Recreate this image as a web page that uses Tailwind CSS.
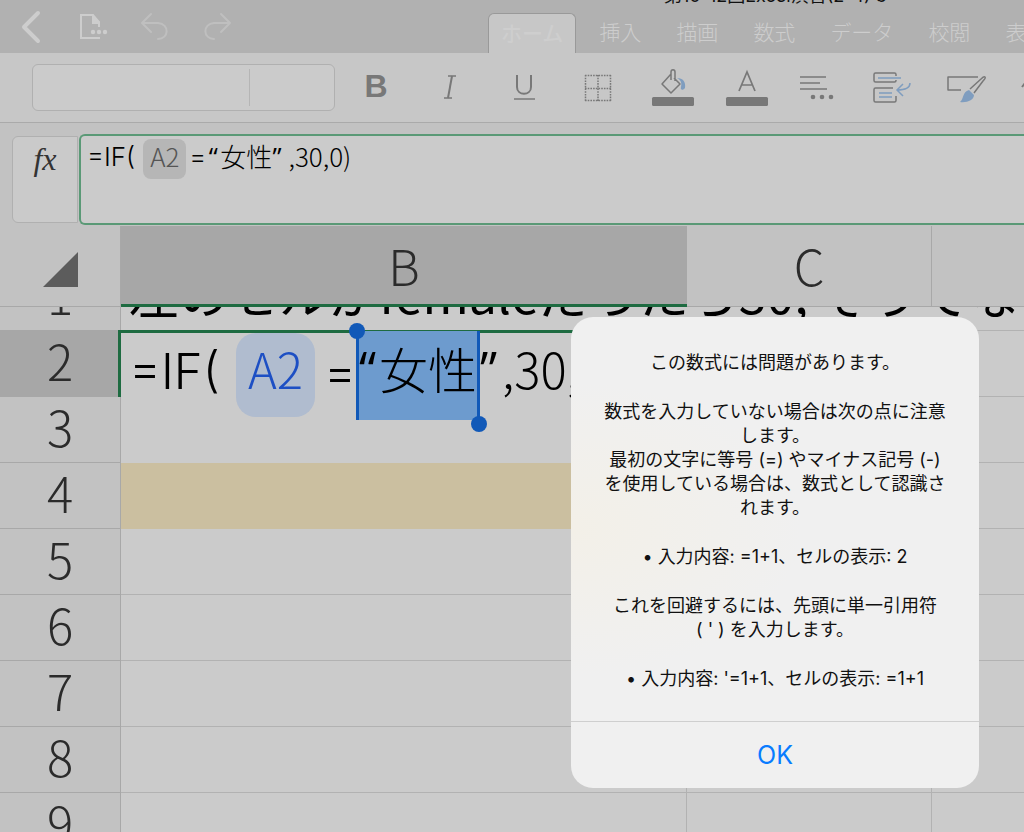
<!DOCTYPE html>
<html lang="ja">
<head>
<meta charset="utf-8">
<title>Excel</title>
<script src="https://cdn.jsdelivr.net/npm/@tailwindcss/browser@4"></script>
</head>
<body class="relative flex h-screen flex-col overflow-hidden bg-[#c2c2c2] font-['Noto_Sans_CJK_JP',sans-serif] text-black">

<header class="relative flex h-[53px] shrink-0 items-end overflow-hidden bg-[#b1b1b1] text-[#cdcdcd]">
  <h1 class="absolute -top-4 left-[664px] font-['Inter','Noto_Sans_CJK_JP',sans-serif] text-[18px] leading-6 whitespace-nowrap text-[#111]">第10-12回Excel演習(2-4) 3</h1>
  <div class="flex h-full w-[488px] shrink-0 items-center">
    <button aria-label="戻る" class="flex w-[61px] justify-center"><svg width="24" height="36" viewBox="0 0 24 36" fill="none" stroke="currentColor" stroke-width="4" stroke-linecap="round" stroke-linejoin="round"><path d="M19 4L5 18l14 14"/></svg></button>
    <button aria-label="ファイル" class="flex w-[64px] justify-center"><svg width="32" height="30" viewBox="0 0 32 30" fill="none"><path d="M23 26H4V3h12l6 7v5" stroke="currentColor" stroke-width="2"/><path d="M15 2l8 8v2h-8z" fill="currentColor"/><g fill="currentColor"><circle cx="16" cy="20" r="2.2"/><circle cx="22" cy="20" r="2.2"/><circle cx="28" cy="20" r="2.2"/></g></svg></button>
    <button aria-label="元に戻す" class="flex w-[60px] justify-center text-[#bfbfbf]"><svg width="30" height="30" viewBox="0 0 30 30" fill="none" stroke="currentColor" stroke-width="2" stroke-linecap="round" stroke-linejoin="round"><path d="M11 2L2 11l9 9M2 11h16c12 1 11 16 0 16"/></svg></button>
    <button aria-label="やり直し" class="flex w-[64px] justify-center text-[#bfbfbf]"><svg width="30" height="30" viewBox="0 0 30 30" fill="none" stroke="currentColor" stroke-width="2" stroke-linecap="round" stroke-linejoin="round"><path d="M19 2l9 9-9 9M28 11H12C0 12 1 27 12 27"/></svg></button>
  </div>
  <nav class="flex h-10 items-start gap-[35px] text-[21px] leading-9 font-light whitespace-nowrap">
    <a href="#" class="-mr-3 h-10 rounded-t-md border border-b-0 border-[#999] bg-[#c7c7c7] px-3 font-medium text-[#cecece]">ホーム</a>
    <a href="#">挿入</a>
    <a href="#">描画</a>
    <a href="#">数式</a>
    <a href="#">データ</a>
    <a href="#">校閲</a>
    <a href="#">表示</a>
  </nav>
</header>

<div class="flex h-[70px] shrink-0 items-center border-b border-[#aaa] bg-[#c7c7c7] pl-8 text-[#787878]">
  <div class="mr-1 flex h-[47px] w-[303px] shrink-0 rounded-md border border-[#b0b0b0] bg-[#cbcbcb] py-1">
    <input aria-label="フォント" class="w-[217px] border-r border-[#b5b5b5] outline-none">
    <input aria-label="フォント サイズ" class="w-20 outline-none">
  </div>
  <button aria-label="太字" class="flex w-[74px] shrink-0 justify-center font-['Liberation_Sans',sans-serif] text-[32px] leading-8 font-bold"><span class="pb-1">B</span></button>
  <button aria-label="斜体" class="flex w-[74px] shrink-0 justify-center"><svg width="14" height="28" viewBox="0 0 14 28" fill="none" stroke="currentColor" stroke-width="2"><path d="M5 2h8M1 24h8" stroke-width="1.5"/><path d="M9 2L5 24"/></svg></button>
  <button aria-label="下線" class="flex w-[74px] shrink-0 justify-center"><svg width="24" height="28" viewBox="0 0 24 28" fill="none" stroke="currentColor" stroke-width="2"><path d="M5 1v12c0 9 14 9 14 0V1"/><path d="M2 25h21" stroke-width="1.5"/></svg></button>
  <button aria-label="罫線" class="flex w-[74px] shrink-0 justify-center"><svg width="28" height="28" viewBox="0 0 28 28" fill="none" stroke="currentColor" stroke-width="1.5" stroke-dasharray="1.6 1.1"><path d="M1 1.5h26M1 14.500h26M1 26.500h26M1.500 1v26M14 1v26M26.500 1v26"/></svg></button>
  <button aria-label="塗りつぶしの色" class="flex w-[76px] shrink-0 justify-center"><svg width="44" height="40" viewBox="0 0 44 40" fill="none"><path d="M20 6L11 16l9 9 9-9-6-6M20 12V4c0-3 4-3 4 0v9" stroke="currentColor" stroke-width="1.500" stroke-linejoin="round"/><path d="M26 10c6 0 9 4 8 10-2 3-5 2-4-1 1-4 0-7-4-9z" fill="#7f9dbf"/><rect x="1" y="29" width="42" height="9" rx="1.500" fill="currentColor"/></svg></button>
  <button aria-label="フォントの色" class="flex w-[72px] shrink-0 justify-center"><svg width="44" height="40" viewBox="0 0 44 40" fill="none"><path d="M14 23L22 4l8 19M17 17h10" stroke="currentColor" stroke-width="1.700"/><rect x="1" y="29" width="42" height="9" rx="1.500" fill="currentColor"/></svg></button>
  <button aria-label="配置" class="flex w-[68px] shrink-0 justify-center"><svg width="40" height="28" viewBox="0 0 40 28"><path d="M3 3h26M3 9h20M3 15h27" stroke="currentColor" stroke-width="1.500"/><g fill="currentColor"><circle cx="16" cy="23" r="2.300"/><circle cx="25" cy="23" r="2.300"/><circle cx="34" cy="23" r="2.300"/></g></svg></button>
  <button aria-label="折り返し" class="flex w-20 shrink-0 justify-center"><svg width="40" height="34" viewBox="0 0 40 34" fill="none" stroke-width="1.500"><path d="M25 5V3.500Q25 2 23.500 2h-19Q3 2 3 3.500v6Q3 11 4.500 11h19q1.500 0 1.500-1.500V9M22 17H4.500Q3 17 3 18.500v11Q3 31 4.500 31h19q1.500 0 1.500-1.500V25" stroke="currentColor"/><path d="M7 7h23M8 22h13M8 26h13M39 12c0 5-4 7-13 7M32 13l-6 6 6 6" stroke="#7f9dbf"/></svg></button>
  <button aria-label="書式のコピー" class="flex w-[70px] shrink-0 justify-center"><svg width="42" height="30" viewBox="0 0 42 30" fill="none" stroke="currentColor" stroke-width="1.500" stroke-linejoin="round"><path d="M33 4H3v13h13M25 16L36 6q3-3 4-2t-2 4L29 20"/><path d="M24 17l5 5c0 5-7 8-14 7 4-3 2-10 9-12z" fill="#7f9dbf" stroke="none"/></svg></button>
  <button aria-label="その他" class="flex w-[74px] shrink-0 pl-5"><svg width="30" height="30" viewBox="0 0 30 30" fill="none" stroke="currentColor" stroke-width="2"><path d="M1 14L8 5l8 9"/></svg></button>
</div>

<div class="flex h-[103px] shrink-0 pt-[11px] pl-3">
  <button aria-label="関数の挿入" class="mt-0.5 flex h-[87px] w-[66px] shrink-0 justify-center rounded-l-md border border-[#b0b0b0] bg-[#cacaca] pt-0.5 font-['Liberation_Serif',serif] text-[32px] leading-10 italic text-[#333]">fx</button>
  <div role="textbox" aria-label="数式バー" class="ml-px h-[91px] flex-1 rounded-l-md border-2 border-r-0 border-[#5a9976] bg-[#cbcbcb] pl-1.5">
    <div class="flex h-11 items-start text-[26px] leading-10 font-light whitespace-nowrap"><span class="pt-px font-['Inter',sans-serif]">=IF(</span><span class="mt-[3px] mr-0.5 ml-2 h-10 rounded-lg bg-[#b6b6b6] px-[7px] leading-[34px] text-[#555]">A2</span><span class="pt-px pl-px font-['Inter',sans-serif]">=</span><span class="w-3.5 text-center font-['Open_Sans',sans-serif] font-normal">“</span><span>女性</span><span class="w-4 font-['Open_Sans',sans-serif] font-normal">”</span><span>,30,0)</span></div>
  </div>
</div>

<main class="relative min-h-0 flex-1 overflow-hidden">
  <table class="w-full table-fixed border-separate border-spacing-0 text-[49px] leading-[54px] font-light text-[#2b2b2b]">
    <colgroup><col class="w-[121px]"><col class="w-[566px]"><col class="w-[245px]"><col></colgroup>
    <thead>
      <tr class="h-[81px]">
        <th class="border-r border-b border-[#a8a8a8] p-0"><button aria-label="すべて選択" class="mt-1.5 mr-[42px] ml-auto block"><svg width="35" height="35" viewBox="0 0 35 35"><path d="M35 0v35H0z" fill="#5c5c5c"/></svg></button></th>
        <th scope="col" class="border-b-3 border-[#1e6b41] bg-[#a7a7a7] p-0 font-light">B</th>
        <th scope="col" class="border-r border-b border-[#a8a8a8] p-0 pb-0.5 font-light">C</th>
        <th scope="col" class="border-b border-[#a8a8a8] p-0"></th>
      </tr>
    </thead>
    <tbody>
      <tr class="h-[23px]">
        <th scope="row" class="border-r border-[#a8a8a8] p-0 font-light"><div class="flex h-[23px] items-end justify-center overflow-hidden"><span class="mb-[9px]">1</span></div></th>
        <td colspan="3" class="bg-[#cbcbcb] p-0 pl-2 text-black"><div class="flex h-[23px] items-end overflow-hidden"><span class="mb-[11px] text-[50px] font-normal whitespace-nowrap">左のセルがfemaleだったら30, そうでない</span></div></td>
      </tr>
      <tr class="h-[67px]"><th scope="row" class="border-r-3 border-[#1e6b41] bg-[#a7a7a7] p-0 pb-2 pl-0.5 font-light">2</th><td class="border-t-3 border-[#1e6b41] bg-[#cbcbcb]"></td><td class="border-y border-[#b2b2b2] bg-[#cbcbcb]"></td><td class="border-y border-[#b2b2b2] bg-[#cbcbcb]"></td></tr>
      <tr class="h-[66px]"><th scope="row" class="border-r border-b border-[#a8a8a8] p-0 pb-2 font-light">3</th><td class="bg-[#cbcbcb]"></td><td class="border-b border-[#b2b2b2] bg-[#cbcbcb]"></td><td class="border-b border-[#b2b2b2] bg-[#cbcbcb]"></td></tr>
      <tr class="h-[66px]"><th scope="row" class="border-r border-b border-[#a8a8a8] p-0 pb-2 font-light">4</th><td class="bg-[#cbbfa0]"></td><td class="border-b border-[#b2b2b2] bg-[#cbcbcb]"></td><td class="border-b border-[#b2b2b2] bg-[#cbcbcb]"></td></tr>
      <tr class="h-[66px]"><th scope="row" class="border-r border-b border-[#a8a8a8] p-0 pb-2 font-light">5</th><td class="border-r border-b border-[#b2b2b2] bg-[#cbcbcb]"></td><td class="border-r border-b border-[#b2b2b2] bg-[#cbcbcb]"></td><td class="border-b border-[#b2b2b2] bg-[#cbcbcb]"></td></tr>
      <tr class="h-[66px]"><th scope="row" class="border-r border-b border-[#a8a8a8] p-0 pb-2 font-light">6</th><td class="border-r border-b border-[#b2b2b2] bg-[#cbcbcb]"></td><td class="border-r border-b border-[#b2b2b2] bg-[#cbcbcb]"></td><td class="border-b border-[#b2b2b2] bg-[#cbcbcb]"></td></tr>
      <tr class="h-[66px]"><th scope="row" class="border-r border-b border-[#a8a8a8] p-0 pb-2 font-light">7</th><td class="border-r border-b border-[#b2b2b2] bg-[#cbcbcb]"></td><td class="border-r border-b border-[#b2b2b2] bg-[#cbcbcb]"></td><td class="border-b border-[#b2b2b2] bg-[#cbcbcb]"></td></tr>
      <tr class="h-[66px]"><th scope="row" class="border-r border-b border-[#a8a8a8] p-0 pb-2 font-light">8</th><td class="border-r border-b border-[#b2b2b2] bg-[#cbcbcb]"></td><td class="border-r border-b border-[#b2b2b2] bg-[#cbcbcb]"></td><td class="border-b border-[#b2b2b2] bg-[#cbcbcb]"></td></tr>
      <tr class="h-[66px]"><th scope="row" class="border-r border-b border-[#a8a8a8] p-0 pb-2 font-light">9</th><td class="border-r border-b border-[#b2b2b2] bg-[#cbcbcb]"></td><td class="border-r border-b border-[#b2b2b2] bg-[#cbcbcb]"></td><td class="border-b border-[#b2b2b2] bg-[#cbcbcb]"></td></tr>
    </tbody>
  </table>

  <!-- in-cell editor -->
  <div role="textbox" aria-label="セル B2" class="absolute top-[105px] left-[121px] flex items-start pl-2 text-[49px] leading-[74px] font-light whitespace-nowrap">
    <span class="w-[107px] pt-1 font-['Inter',sans-serif]">=IF(</span>
    <span class="mt-0.5 h-[84px] rounded-[20px] bg-[#b0bccf] px-3 leading-[70px] text-[#1d4fc4]">A2</span>
    <span class="w-[41px] pt-1 text-right font-['Inter',sans-serif]">=</span>
    <span class="relative flex h-[89px] border-x-3 border-[#1159b8] bg-[#6d9bce]">
      <span class="absolute -top-2 -left-2.5 size-4 rounded-full bg-[#1159b8]"></span>
      <span class="w-5 font-['Open_Sans',sans-serif] font-normal">“</span><span>女性</span>
      <span class="absolute -right-2.5 -bottom-3 size-4 rounded-full bg-[#1159b8]"></span>
    </span>
    <span class="w-[22px] font-['Open_Sans',sans-serif] font-normal">”</span><span>,30,0)</span>
  </div>
</main>

<section role="alertdialog" aria-modal="true" aria-describedby="message" class="absolute top-[317px] left-[571px] flex w-[408px] flex-col rounded-[22px] bg-[#f0f0f0] bg-radial-[at_0%_45%] from-[#f3f0e8] to-[#f0f0f0] to-40%">
  <div id="message" class="flex flex-col gap-[25px] px-5 pt-[34px] pb-[30px] text-center font-['Inter','Noto_Sans_CJK_JP',sans-serif] text-[18px] leading-6 whitespace-nowrap text-[#111]">
    <p>この数式には問題があります。</p>
    <p>数式を入力していない場合は次の点に注意<br>します。<br>最初の文字に等号 (=) やマイナス記号 (-)<br>を使用している場合は、数式として認識さ<br>れます。</p>
    <p>• 入力内容: =1+1、セルの表示: 2</p>
    <p>これを回避するには、先頭に単一引用符<br>( ' ) を入力します。</p>
    <p>• 入力内容: '=1+1、セルの表示: =1+1</p>
  </div>
  <button class="h-[67px] border-t border-[#cfcfcf] pt-0.5 font-['Inter',sans-serif] text-[25px] text-[#087cff]">OK</button>
</section>
</body>
</html>
